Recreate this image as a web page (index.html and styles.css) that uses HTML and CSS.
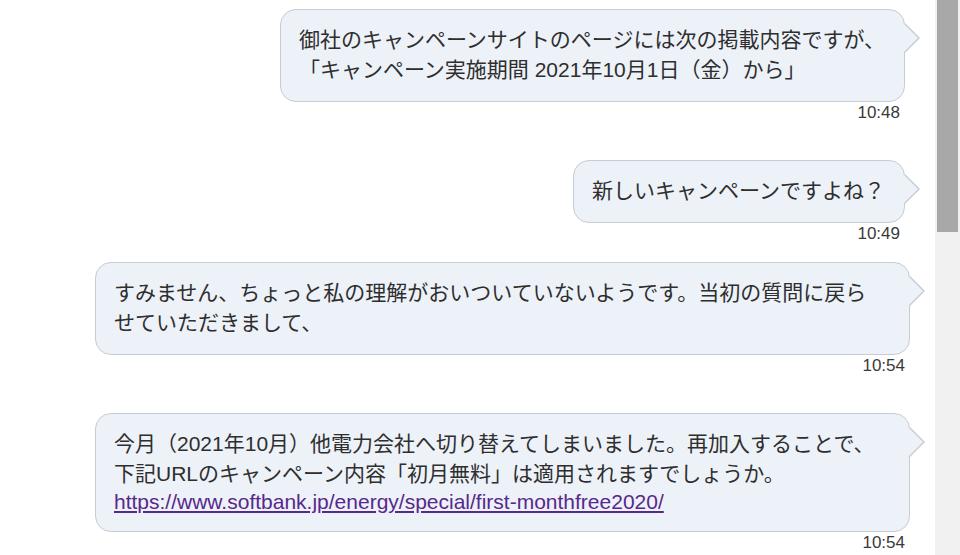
FILE: index.html
```html
<!DOCTYPE html>
<html lang="ja">
<head>
<meta charset="utf-8">
<title>チャット</title>
<link rel="stylesheet" href="styles.css">
</head>
<body>
<div class="window">
  <main class="chat">
    <div class="msg msg--gap-lg">
      <div class="bubble">御社のキャンペーンサイトのページには次の掲載内容ですが、<br>「キャンペーン実施期間 2021年10月1日（金）から」</div>
      <div class="time">10:48</div>
    </div>
    <div class="msg msg--gap-sm">
      <div class="bubble">新しいキャンペーンですよね？</div>
      <div class="time">10:49</div>
    </div>
    <div class="msg msg--wide msg--gap-lg">
      <div class="bubble bubble--full">すみません、ちょっと私の理解がおいついていないようです。当初の質問に戻ら<br>せていただきまして、</div>
      <div class="time">10:54</div>
    </div>
    <div class="msg msg--wide">
      <div class="bubble bubble--full">今月（2021年10月）他電力会社へ切り替えてしまいました。再加入することで、<br>下記URLのキャンペーン内容「初月無料」は適用されますでしょうか。<a class="link" href="#">https://www.softbank.jp/energy/special/first-monthfree2020/</a></div>
      <div class="time">10:54</div>
    </div>
  </main>
  <aside class="scrollbar"><div class="thumb"></div></aside>
</div>
</body>
</html>
```

FILE: styles.css
```css
html, body {
  margin: 0;
  padding: 0;
  height: 555px;
  overflow: hidden;
  background: #ffffff;
}

.window {
  display: flex;
  height: 555px;
}

.chat {
  width: 935px;
  box-sizing: border-box;
  padding: 9px 30px 0 0;
  display: flex;
  flex-direction: column;
  align-items: flex-end;
  font-family: "Liberation Sans", "Noto Sans CJK JP", sans-serif;
  color: #2e2e2e;
}

.msg {
  display: flex;
  flex-direction: column;
  align-items: flex-end;
}

.msg--wide {
  margin-right: -5px;
}

.msg--gap-lg {
  margin-bottom: 37px;
}

.msg--gap-sm {
  margin-bottom: 18px;
}

.bubble {
  position: relative;
  box-sizing: border-box;
  max-width: 815px;
  padding: 15px 19px 16px 18px;
  background: #edf1f8;
  border: 1px solid #c7cbd3;
  border-radius: 16px;
  font-size: 21px;
  line-height: 30px;
}

.bubble--full {
  width: 815px;
}

.bubble::before {
  content: "";
  position: absolute;
  left: calc(100% + 1px);
  top: 13px;
  width: 0;
  height: 0;
  border-left: 15px solid #c7cbd3;
  border-top: 15px solid transparent;
  border-bottom: 15px solid transparent;
}

.bubble::after {
  content: "";
  position: absolute;
  left: 100%;
  top: 14px;
  width: 0;
  height: 0;
  border-left: 14px solid #edf1f8;
  border-top: 14px solid transparent;
  border-bottom: 14px solid transparent;
}

.link {
  display: block;
  line-height: 26px;
  color: #58288c;
  text-decoration: underline;
}

.time {
  margin-top: 1px;
  padding-right: 5px;
  font-family: "Liberation Sans", sans-serif;
  font-size: 17px;
  line-height: 20px;
  color: #3a3a3a;
}

.scrollbar {
  width: 25px;
  height: 555px;
  background: #f1f1f1;
  display: flex;
  justify-content: center;
}

.thumb {
  width: 21px;
  height: 232px;
  background: #a8a8a8;
}
```
